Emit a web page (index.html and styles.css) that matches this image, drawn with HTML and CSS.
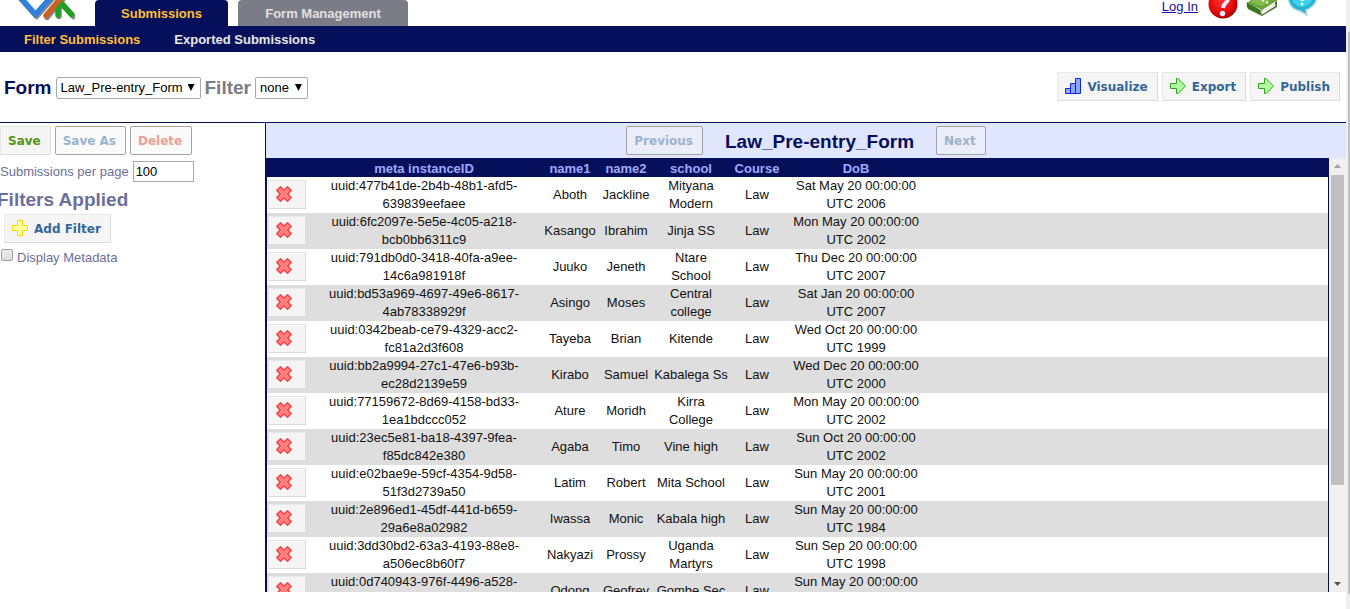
FILE: index.html
```
<!DOCTYPE html>
<html lang="en">
<head>
<meta charset="utf-8">
<title>Submissions</title>
<link rel="stylesheet" href="styles.css">
</head>
<body>
<svg class="defs" aria-hidden="true">
  <symbol id="cross" viewBox="0 0 16 16"><path d="M4.5 .8 8 4.2 11.5 .8 15.2 4.5 11.8 8 15.2 11.5 11.5 15.2 8 11.8 4.5 15.2 .8 11.5 4.2 8 .8 4.5Z" fill="#ff8080" stroke="#fa4444" stroke-width="1.5" stroke-linejoin="round"/></symbol>
  <symbol id="arrow" viewBox="0 0 16 16"><path d="M.5 5.500H6.500V.5H8L15.500 8 8 15.500H6.500V10.500H.5Z" fill="#b0ffa0" stroke="#2aa51c"/></symbol>
</svg>
<div class="page">
  <div class="app">
    <header class="top">
      <svg class="logo" width="58" height="20" viewBox="0 0 58 20" aria-label="ODK" role="img">
        <g fill="none" stroke-width="5.500" stroke-linecap="round" stroke-linejoin="round">
          <path d="M3-2 18.500 15.500 35-3M41 15.500V1M40-1 55.500 15.500M29 16.500 45-2" stroke="#555" transform="translate(1 1)" opacity=".7"/>
          <path d="M41 15V0M40-2 54.500 14.500" stroke="#1fa01f"/>
          <path d="M3-3 18.500 14.500 35-4" stroke="#2d80dc"/>
          <path d="M29 15.500 45-3" stroke="#c95f27"/>
        </g>
      </svg>
      <nav class="tabs">
        <a class="tab tab-on" href="#submissions">Submissions</a>
        <a class="tab tab-wide" href="#forms">Form Management</a>
      </nav>
      <div class="links">
        <a class="login" href="#login">Log In</a>
        <a href="#help" aria-label="Help"><svg width="30" height="20" viewBox="0 0 30 20"><defs><radialGradient id="rg" cx=".45" cy=".4" r=".6"><stop offset="0" stop-color="#ff3030"/><stop offset=".7" stop-color="#e80808"/><stop offset="1" stop-color="#a80000"/></radialGradient></defs><circle cx="15" cy="4" r="14.500" fill="url(#rg)"/><path d="M10-3C10-8 21-8 20-1 19.500 3 15.500 3 15 8" fill="none" stroke="#e8e8ff" stroke-width="4"/><circle cx="14.500" cy="13.500" r="2.700" fill="#e8e8ff"/></svg></a>
        <a href="#guide" aria-label="Guide"><svg width="32" height="20" viewBox="0 0 32 20"><path d="M1 2 16 11 31 1V7L16 16 2 9Q0 6 1 2Z" fill="#3c741d"/><path d="M16 9 31 0 29 3 30 6 16 15Q13 12 16 9Z" fill="#f2f2ea" stroke="#5a7a4a" stroke-width=".7"/><path d="M1 3 10-4H31V0L16 10Z" fill="#6aa638"/><path d="M4 2 12-3H28L16 6Z" fill="#83bd4e"/><path d="M16 0 18 1M20 2 22 3" stroke="#eff8e4" stroke-width="2"/></svg></a>
        <a href="#feedback" aria-label="Feedback"><svg width="32" height="20" viewBox="0 0 32 20"><path d="M2-3H31Q30 6 20 10L21 15 14 11Q3 9 2-3Z" fill="#27b1cf" stroke="#a9d9e3" stroke-width="1.500"/><path d="M5-3H27Q26 5 16 7 7 6 5-3Z" fill="#3fd0ec"/><path d="M13-4Q20-5 18-2 16-1 16 1" fill="none" stroke="#e9ffff" stroke-width="3"/><circle cx="16" cy="4" r="1.500" fill="#e9ffff"/></svg></a>
      </div>
    </header>
    <nav class="subnav">
      <a class="sub-on" href="#filter">Filter Submissions</a>
      <a href="#exported">Exported Submissions</a>
    </nav>
    <section class="bar">
      <label class="heading" for="form">Form</label>
      <span class="pick"><select id="form" class="sel-form"><option>Law_Pre-entry_Form</option></select></span>
      <label class="heading heading-gray" for="filter">Filter</label>
      <span class="pick"><select id="filter" class="sel-filter"><option>none</option></select></span>
      <div class="actions">
        <button class="btn" type="button"><svg width="16" height="16" viewBox="0 0 16 16"><path d="M.5 10.500H5.500V15.500H.5ZM5.500 5.500H10.500V15.500H5.500ZM10.500.5H15.500V15.500H10.500Z" fill="#8ea6ff" stroke="#1222ee"/></svg>Visualize</button>
        <button class="btn" type="button"><svg width="16" height="16"><use href="#arrow"/></svg>Export</button>
        <button class="btn" type="button"><svg width="16" height="16"><use href="#arrow"/></svg>Publish</button>
      </div>
    </section>
    <main class="main">
      <aside class="side">
        <div class="side-btns">
          <button class="btn btn-save" type="button">Save</button>
          <button class="btn btn-off" type="button" disabled>Save As</button>
          <button class="btn btn-off btn-del" type="button" disabled>Delete</button>
        </div>
        <div class="per-page"><label for="count">Submissions per page</label><input id="count" type="text" value="100"></div>
        <h2 class="applied">Filters Applied</h2>
        <button class="btn btn-add" type="button"><svg width="16" height="16" viewBox="0 0 16 16"><path d="M5.500.5H10.500V5.500H15.500V10.500H10.500V15.500H5.500V10.500H.5V5.500H5.500Z" fill="#ffffa0" stroke="#ffdc00"/></svg>Add Filter</button>
        <div class="meta"><input id="meta" type="checkbox"><label for="meta">Display Metadata</label></div>
      </aside>
      <section class="content">
        <div class="pager">
          <button class="btn btn-off" type="button" disabled>Previous</button>
          <h1 class="heading">Law_Pre-entry_Form</h1>
          <button class="btn btn-off" type="button" disabled>Next</button>
        </div>
        <div class="scroller">
          <div class="view">
            <table class="grid">
              <colgroup><col class="c-del"><col class="c-id"><col class="c-n1"><col class="c-n2"><col class="c-school"><col class="c-course"><col class="c-dob"><col></colgroup>
              <thead><tr><th></th><th>meta instanceID</th><th>name1</th><th>name2</th><th>school</th><th>Course</th><th>DoB</th><th></th></tr></thead>
              <tbody id="rows"></tbody>
            </table>
          </div>
          <div class="scrollbar"><span class="up"></span><span class="thumb"></span><span class="down"></span></div>
        </div>
      </section>
    </main>
  </div>
  <div class="page-scroll"><span class="page-thumb"></span></div>
</div>
<script src="rows.js"></script>
</body>
</html>
```
FILE: styles.css
```
* { box-sizing: border-box; }
body {
  margin: 0;
  background: #fff;
  color: #111;
  font: 13px/18px "Liberation Sans", Arial, sans-serif;
}
svg { display: block; flex: none; }
.defs { position: absolute; width: 0; height: 0; }
.page { display: flex; height: 100vh; overflow: hidden; }
.app { flex: 1; min-width: 0; display: flex; flex-direction: column; padding-bottom: 17px; }
.page-scroll { width: 4px; padding: 32px 0 15px 2px; background: #f0f0f0; display: flex; }
.page-thumb { flex: 1; background: #c0c0c0; }

.top { display: flex; height: 26px; padding-right: 28px; }
.logo { margin-left: 17px; }
.tabs { display: flex; gap: 10px; margin-left: 20px; }
.tab {
  width: 133px;
  padding-top: 5px;
  border-radius: 4px 4px 0 0;
  background: #7c7c86;
  color: #e0e0e0;
  font-weight: bold;
  text-align: center;
  text-decoration: none;
}
.tab-wide { width: 170px; }
.tab-on { background: #06105a; color: #ffbf36; }
.links { display: flex; gap: 8px; margin-left: auto; }
.login { color: #1a0dab; line-height: 14px; margin-right: 2px; }

.subnav { display: flex; gap: 34px; height: 26px; padding: 5px 24px 0; background: #06105a; font-weight: bold; }
.subnav a { color: #e8e8e8; text-decoration: none; }
.subnav .sub-on { color: #ffbf36; }

.bar { display: flex; align-items: center; gap: 4px; height: 71px; padding: 2px 6px 0 4px; border-bottom: 1px solid #06105a; }
.heading { margin: 0; color: #06105a; font-size: 19px; line-height: 24px; font-weight: bold; }
.heading-gray { color: #7c7c86; }
.pick { position: relative; display: flex; }
.pick::after {
  content: "";
  position: absolute;
  right: 6px;
  top: 7px;
  width: 7px;
  height: 7px;
  background: #000;
  clip-path: polygon(0 0, 100% 0, 50% 100%);
  pointer-events: none;
}
select {
  appearance: none;
  height: 22px;
  padding: 0 4px;
  border: 1px solid #a9a9a9;
  border-radius: 2px;
  background: #fff;
  color: #000;
  font: inherit;
}
.sel-form { width: 145px; }
.sel-filter { width: 53px; }
.actions { display: flex; gap: 4px; margin: 0 0 4px auto; }

.btn {
  display: flex;
  align-items: center;
  gap: 6px;
  height: 29px;
  padding: 1px 9px 0 7px;
  border: 1px solid #e8e8e8;
  border-right-color: #dcdcdc;
  border-bottom-color: #dcdcdc;
  border-radius: 1px;
  background: #f5f5f5;
  color: #336699;
  font: bold 12px/16px "DejaVu Sans", Verdana, sans-serif;
  white-space: nowrap;
}
.btn svg { margin-top: -2px; }
.btn-save { color: #529214; }
.btn-off { padding-top: 0; border-color: #a2a2a8; border-radius: 2px; background: rgba(245, 245, 245, .5); color: #99b3cc; }
.btn-save { padding-top: 0; }
.btn-del { color: #e9a094; }

.main { flex: 1; min-height: 0; display: flex; }
.side { width: 265px; color: #6b6f9b; }
.side-btns { display: flex; gap: 4px; padding-top: 3px; }
.per-page { display: flex; align-items: center; gap: 4px; margin-top: 6px; }
.per-page input {
  width: 61px;
  height: 21px;
  padding: 0 2px;
  border: 1px solid #a9a9a9;
  color: #000;
  font: inherit;
}
.applied { margin: 6px 0 2px -3px; font-size: 19px; line-height: 24px; }
.btn-add { margin-left: 4px; }
.meta { display: flex; gap: 4px; margin-top: 6px; }
.meta input {
  appearance: none;
  width: 12px;
  height: 12px;
  margin: 0 0 0 1px;
  border: 1px solid #a0a0a0;
  border-radius: 2px;
  background: linear-gradient(#ededed, #dcdcdc);
}

.content { flex: 1; min-width: 0; display: flex; flex-direction: column; border-left: 1px solid #06105a; }
.pager { display: flex; justify-content: center; align-items: center; gap: 22px; height: 35px; background: #e0e6fd; }
.pager .heading { padding-top: 2px; }
.scroller { flex: 1; min-height: 0; display: flex; }
.view { flex: 1; overflow: hidden; border: solid #06105a; border-width: 0 1px; }
.grid { width: 100%; table-layout: fixed; border-collapse: collapse; text-align: center; }
.c-del { width: 40px; }
.c-id { width: 234px; }
.c-n1 { width: 58px; }
.c-n2 { width: 54px; }
.c-school { width: 76px; }
.c-course { width: 56px; }
.c-dob { width: 142px; }
.grid th { height: 19px; padding: 2px 1px 0; line-height: 17px; background: #06105a; color: #a0a8ff; }
.grid td { height: 36px; padding: 0 1px; }
.grid td:first-child { padding-top: 3px; vertical-align: top; }
.grid tr:nth-child(even) td { background: #dedede; }
.btn-row { width: 38px; }

.scrollbar { display: flex; flex-direction: column; align-items: center; justify-content: space-between; width: 17px; padding: 6px 0; background: #f0f0f0; }
.up, .down { width: 7px; height: 4px; background: #a0a0a0; clip-path: polygon(50% 0, 100% 100%, 0 100%); }
.down { background: #505050; clip-path: polygon(0 0, 100% 0, 50% 100%); }
.thumb { width: 13px; height: 310px; margin: 7px 0 auto; background: #c0c0c0; }
```
FILE: rows.js
```
const rows = [
  ["uuid:477b41de-2b4b-48b1-afd5-639839eefaee", "Aboth", "Jackline", "Mityana Modern", "Sat May 20 00:00:00 UTC 2006"],
  ["uuid:6fc2097e-5e5e-4c05-a218-bcb0bb6311c9", "Kasango", "Ibrahim", "Jinja SS", "Mon May 20 00:00:00 UTC 2002"],
  ["uuid:791db0d0-3418-40fa-a9ee-14c6a981918f", "Juuko", "Jeneth", "Ntare School", "Thu Dec 20 00:00:00 UTC 2007"],
  ["uuid:bd53a969-4697-49e6-8617-4ab78338929f", "Asingo", "Moses", "Central college", "Sat Jan 20 00:00:00 UTC 2007"],
  ["uuid:0342beab-ce79-4329-acc2-fc81a2d3f608", "Tayeba", "Brian", "Kitende", "Wed Oct 20 00:00:00 UTC 1999"],
  ["uuid:bb2a9994-27c1-47e6-b93b-ec28d2139e59", "Kirabo", "Samuel", "Kabalega Ss", "Wed Dec 20 00:00:00 UTC 2000"],
  ["uuid:77159672-8d69-4158-bd33-1ea1bdccc052", "Ature", "Moridh", "Kirra College", "Mon May 20 00:00:00 UTC 2002"],
  ["uuid:23ec5e81-ba18-4397-9fea-f85dc842e380", "Agaba", "Timo", "Vine high", "Sun Oct 20 00:00:00 UTC 2002"],
  ["uuid:e02bae9e-59cf-4354-9d58-51f3d2739a50", "Latim", "Robert", "Mita School", "Sun May 20 00:00:00 UTC 2001"],
  ["uuid:2e896ed1-45df-441d-b659-29a6e8a02982", "Iwassa", "Monic", "Kabala high", "Sun May 20 00:00:00 UTC 1984"],
  ["uuid:3dd30bd2-63a3-4193-88e8-a506ec8b60f7", "Nakyazi", "Prossy", "Uganda Martyrs", "Sun Sep 20 00:00:00 UTC 1998"],
  ["uuid:0d740943-976f-4496-a528-", "Odong", "Geofrey", "Gombe Sec", "Sun May 20 00:00:00"]
];
document.getElementById("rows").innerHTML = rows.map(([id, first, last, school, dob], i) => {
  const tail = i === rows.length - 1 ? "<br>&nbsp;" : "";
  return `<tr><td><button class="btn btn-row" type="button" aria-label="Delete"><svg width="16" height="16"><use href="#cross"/></svg></button></td>
  <td>${id}${tail}</td><td>${first}</td><td>${last}</td><td>${school}</td><td>Law</td><td>${dob}${tail}</td><td></td></tr>`;
}).join("");
```
